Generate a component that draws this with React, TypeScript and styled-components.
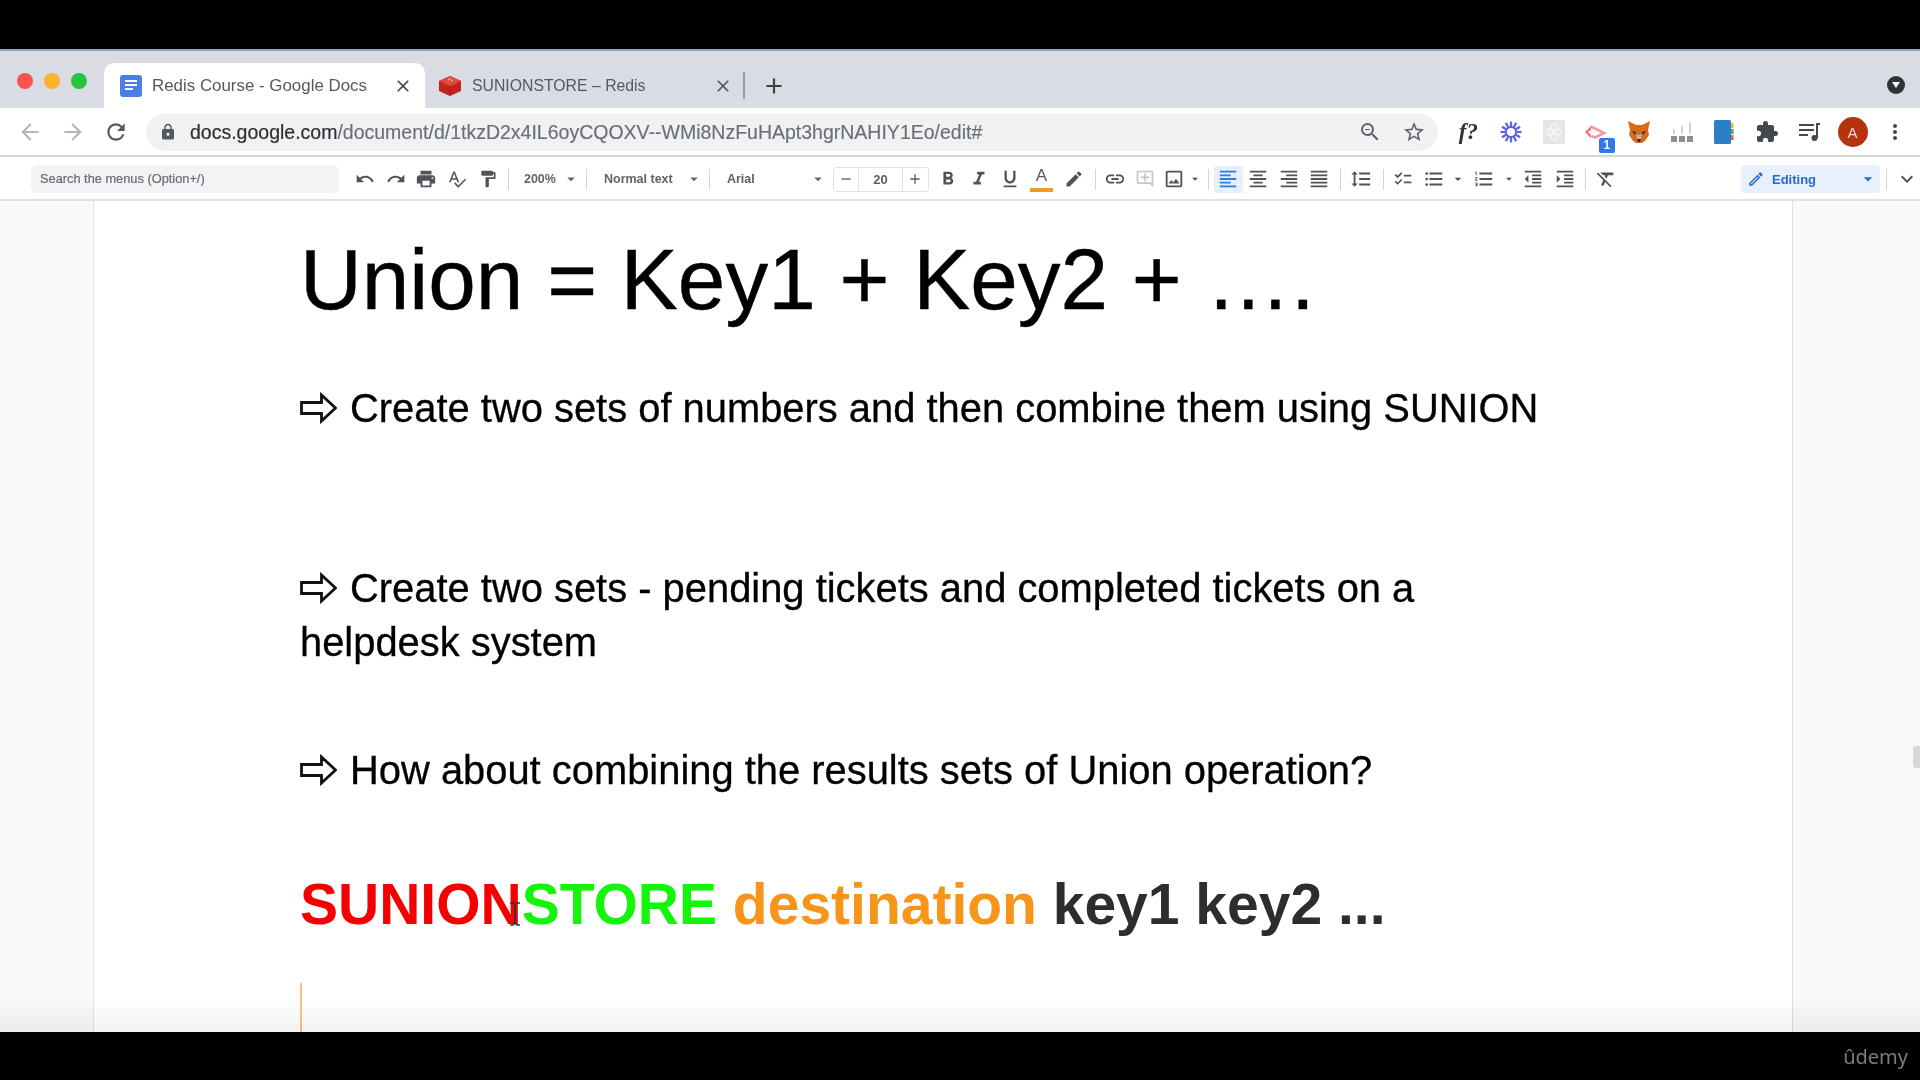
import React from "react";
import styled, { createGlobalStyle } from "styled-components";
import {
  MdArrowBack, MdArrowForward, MdRefresh, MdLock, MdZoomOut, MdStarBorder, MdExtension, MdMoreVert, MdClose, MdAdd,
  MdUndo, MdRedo, MdPrint, MdSpellcheck, MdFormatPaint, MdArrowDropDown, MdRemove, MdFormatBold, MdFormatItalic,
  MdFormatUnderlined, MdEdit, MdLink, MdOutlineAddComment, MdOutlineImage, MdFormatAlignLeft, MdFormatAlignCenter,
  MdFormatAlignRight, MdFormatAlignJustify, MdFormatLineSpacing, MdChecklist, MdFormatListBulleted, MdFormatListNumbered,
  MdFormatIndentDecrease, MdFormatIndentIncrease, MdFormatClear, MdKeyboardArrowDown, MdOutlineEdit,
} from "react-icons/md";

const Global = createGlobalStyle`
  html, body { margin: 0; padding: 0; background: #000; }
  body { font-family: "Liberation Sans", Arial, sans-serif; }
`;

const Screen = styled.div`
  width: 1920px;
  height: 1080px;
  display: flex;
  flex-direction: column;
  background: #000;
  overflow: hidden;
`;
const Letterbox = styled.div<{ $h: number }>`
  height: ${(p) => p.$h}px;
  flex: none;
  background: #000;
  display: flex;
  justify-content: flex-end;
  align-items: center;
`;
const UdemyMark = styled.span`
  color: #7c7c7c;
  font-size: 20px;
  font-family: "Noto Sans", sans-serif;
  margin: 1px 12px 0 0;
  filter: blur(0.5px);
`;
const Chrome = styled.div`
  flex: none;
  filter: blur(0.55px);
`;
const TabStrip = styled.div`
  height: 59px;
  box-sizing: border-box;
  background: #d9dce3;
  border-top: 2px solid #8fa6c6;
  display: flex;
  align-items: flex-end;
`;
const Lights = styled.div`
  width: 104px;
  height: 45px;
  box-sizing: border-box;
  padding: 10px 0 0 17px;
  display: flex;
  gap: 11px;
  align-items: flex-start;
`;
const Light = styled.span<{ $c: string }>`
  width: 16px;
  height: 16px;
  border-radius: 50%;
  background: ${(p) => p.$c};
`;
const Tab = styled.div<{ $active?: boolean }>`
  width: ${(p) => (p.$active ? 321 : 318)}px;
  height: 45px;
  box-sizing: border-box;
  padding: 0 ${(p) => (p.$active ? 12 : 10)}px 0 ${(p) => (p.$active ? 16 : 13)}px;
  background: ${(p) => (p.$active ? "#fff" : "transparent")};
  border-radius: 10px 10px 0 0;
  display: flex;
  align-items: center;
  gap: 10px;
  color: #55585d;
`;
const TabTitle = styled.span<{ $size: number }>`
  flex: 1;
  white-space: nowrap;
  font-size: ${(p) => p.$size}px;
`;
const TabDivider = styled.span`
  width: 2px;
  height: 27px;
  margin-bottom: 9px;
  background: #9a9da3;
`;
const NewTab = styled.span`
  width: 58px;
  height: 45px;
  display: flex;
  align-items: center;
  justify-content: center;
  color: #3c4043;
  font-size: 26px;
`;
const ProfileDot = styled.span`
  margin: 0 15px 14px auto;
  width: 18px;
  height: 18px;
  border-radius: 50%;
  background: #2f3336;
  display: flex;
  align-items: center;
  justify-content: center;
`;
const NavBar = styled.div`
  height: 49px;
  box-sizing: border-box;
  background: #fff;
  border-bottom: 2px solid #d5d7da;
  display: flex;
  align-items: center;
  padding: 1px 0 0 8px;
`;
const NavBtn = styled.span<{ $c: string; $w: number }>`
  width: ${(p) => p.$w}px;
  display: flex;
  justify-content: center;
  color: ${(p) => p.$c};
  font-size: 26px;
`;
const Omnibox = styled.div`
  margin-left: 9px;
  width: 1292px;
  height: 37px;
  box-sizing: border-box;
  border-radius: 19px;
  background: #f0f1f3;
  display: flex;
  align-items: center;
  padding: 0 2px 0 13px;
  font-size: 19.5px;
  white-space: nowrap;
`;
const Lock = styled.span`
  color: #55585c;
  display: flex;
  font-size: 18px;
  margin-right: 13px;
`;
const Host = styled.span`
  color: #2e3033;
  -webkit-text-stroke: 0.2px #2e3033;
`;
const Path = styled.span`
  color: #6c7074;
  flex: 1;
  -webkit-text-stroke: 0.15px #6c7074;
`;
const OmniIcon = styled.span`
  display: flex;
  color: #5f6368;
  font-size: 24px;
  width: 44px;
  justify-content: center;
`;
const Extensions = styled.div`
  display: flex;
  align-items: center;
  margin-left: 9px;
`;
const Ext = styled.span`
  width: 42.7px;
  display: flex;
  justify-content: center;
  align-items: center;
  position: relative;
  color: #45484c;
  font-size: 24px;
`;
const FnGlyph = styled.span`
  font-family: "Liberation Serif", serif;
  font-style: italic;
  font-weight: 700;
  font-size: 23px;
  color: #333;
`;
const Badge = styled.span`
  position: absolute;
  right: 3px;
  bottom: -9px;
  width: 16px;
  height: 15px;
  border-radius: 2px;
  background: #2f7ae5;
  color: #fff;
  font-size: 12px;
  font-weight: 700;
  text-align: center;
  line-height: 15px;
`;
const Avatar = styled.span`
  width: 30px;
  height: 30px;
  border-radius: 50%;
  background: #b5330f;
  color: #f5d9d0;
  font-size: 15px;
  display: flex;
  align-items: center;
  justify-content: center;
`;
const Toolbar = styled.div`
  height: 44px;
  box-sizing: border-box;
  background: #fff;
  border-bottom: 2px solid #dfe1e4;
  display: flex;
  align-items: center;
  padding: 2px 0 0 31px;
  color: #55585c;
`;
const SearchMenus = styled.div`
  width: 308px;
  height: 28px;
  box-sizing: border-box;
  margin-right: 11px;
  border-radius: 6px;
  background: #f1f3f4;
  color: #686b70;
  font-size: 12.8px;
  -webkit-text-stroke: 0.2px #686b70;
  line-height: 28px;
  padding-left: 9px;
`;
const Slot = styled.span<{ $w: number; $c?: string; $s?: number; $bg?: boolean }>`
  flex: none;
  width: ${(p) => p.$w}px;
  height: 27px;
  display: flex;
  align-items: center;
  justify-content: center;
  color: ${(p) => p.$c || "#505357"};
  font-size: ${(p) => p.$s || 22}px;
  background: ${(p) => (p.$bg ? "#e6effc" : "transparent")};
  border-radius: 2px;
`;
const Sep = styled.span<{ $l?: number; $r?: number }>`
  flex: none;
  width: 1px;
  height: 21px;
  background: #d3d5d8;
  margin: 0 ${(p) => p.$r ?? 5}px 0 ${(p) => p.$l ?? 5}px;
`;
const Drop = styled.span<{ $w: number; $pad: number }>`
  flex: none;
  width: ${(p) => p.$w}px;
  box-sizing: border-box;
  padding: 0 1px 0 ${(p) => p.$pad}px;
  display: flex;
  align-items: center;
  justify-content: space-between;
  font-size: 12.5px;
  font-weight: 700;
  color: #606367;
  white-space: nowrap;
`;
const SizeBox = styled.div`
  flex: none;
  margin: 0 4px 0 5px;
  width: 96px;
  height: 25px;
  box-sizing: border-box;
  border: 1px solid #e0e2e5;
  border-radius: 3px;
  display: grid;
  grid-template-columns: 24px 1fr 25px;
  align-items: center;
  font-weight: 700;
  color: #5b5e62;
  text-align: center;
`;
const SizeCell = styled.span`
  height: 100%;
  display: flex;
  align-items: center;
  justify-content: center;
  font-size: 16px;
`;
const SizeValue = styled(SizeCell)`
  font-size: 13px;
  border-left: 1px solid #e0e2e5;
  border-right: 1px solid #e0e2e5;
`;
const ColorA = styled.span`
  width: 23px;
  height: 26px;
  box-sizing: border-box;
  border-bottom: 4px solid #ef9a2d;
  font-size: 17px;
  line-height: 20px;
  text-align: center;
  color: #55585c;
`;
const EditPill = styled.div`
  margin-left: auto;
  width: 139px;
  height: 28px;
  box-sizing: border-box;
  border-radius: 4px;
  background: #e8f0fd;
  color: #2a69d0;
  display: flex;
  align-items: center;
  padding: 0 2px 0 6px;
  font-size: 13px;
  font-weight: 700;
  gap: 7px;
`;
const EditLabel = styled.span`
  flex: 1;
`;
const Workspace = styled.main`
  flex: 1;
  min-height: 0;
  position: relative;
  background: #f8f9fa;
  overflow: hidden;
  display: flex;
  padding-left: 93px;
`;
const Page = styled.article`
  width: 1700px;
  flex: none;
  box-sizing: border-box;
  background: #fff;
  border-left: 1px solid #e1e3e6;
  border-right: 1px solid #dcdee1;
  padding: 31px 0 0 206px;
  color: #000;
  filter: blur(0.35px);
`;
const Heading = styled.h1`
  margin: 0;
  font-size: 85.5px;
  font-weight: 400;
  line-height: 96px;
  white-space: nowrap;
  -webkit-text-stroke: 0.4px #000;
`;
const Line = styled.p<{ $top: number }>`
  margin: ${(p) => p.$top}px 0 0;
  font-size: 39.9px;
  line-height: 54px;
  white-space: nowrap;
  -webkit-text-stroke: 0.3px #000;
`;
const ArrowGlyph = styled.svg`
  width: 37px;
  height: 32px;
  margin-right: 13px;
  vertical-align: -2px;
`;
const Command = styled.p`
  margin: 72px 0 0;
  font-size: 57px;
  line-height: 70px;
  font-weight: 700;
  white-space: nowrap;
  color: #2d2d2d;
`;
const Word = styled.span<{ $c: string }>`
  color: ${(p) => p.$c};
`;
const Caret = styled.div`
  width: 2px;
  height: 60px;
  margin-top: 44px;
  background: #f4c48f;
`;
const IBeam = styled.svg`
  position: absolute;
  left: 507px;
  top: 701px;
`;
const Thumb = styled.span`
  position: absolute;
  right: 0;
  top: 545px;
  width: 7px;
  height: 22px;
  border-radius: 3px 0 0 3px;
  background: #d6d8dc;
`;
const BottomFade = styled.div`
  position: absolute;
  left: 0;
  right: 0;
  bottom: 0;
  height: 34px;
  background: linear-gradient(rgba(0, 0, 0, 0), rgba(0, 0, 0, 0.055));
  pointer-events: none;
`;

const DocsIcon = () => (
  <svg width="22" height="22" viewBox="0 0 22 22">
    <rect x="0" y="0" width="22" height="22" rx="3" fill="#4a7fe8" />
    <path d="M5 6h12M5 10h12M5 14h8" stroke="#fff" strokeWidth="2" />
  </svg>
);
const RedisIcon = () => (
  <svg width="24" height="22" viewBox="0 0 24 22">
    <path d="M1 6l11-5 11 5v10l-11 5L1 16z" fill="#c4221c" />
    <path d="M1 6l11 5 11-5-11-5z" fill="#df4a3c" />
    <path d="M12 11v10" stroke="#a51a15" strokeWidth="1" />
    <path d="M10 5l3-1.5M13 6l2-1" stroke="#f4c6c0" strokeWidth="1" />
  </svg>
);
const Burst = () => (
  <svg width="22" height="22" viewBox="0 0 22 22">
    <g stroke="#5d62e0" strokeWidth="2.2">
      {Array.from({ length: 12 }).map((_, i) => {
        const a = (i * Math.PI) / 6;
        return <line key={i} x1={11 + 4.5 * Math.cos(a)} y1={11 + 4.5 * Math.sin(a)} x2={11 + 10.5 * Math.cos(a)} y2={11 + 10.5 * Math.sin(a)} />;
      })}
    </g>
    <circle cx="11" cy="11" r="5" fill="none" stroke="#5d62e0" strokeWidth="1.8" />
  </svg>
);
const GreySquare = () => (
  <svg width="22" height="24" viewBox="0 0 22 24">
    <rect width="22" height="24" rx="1" fill="#e6e6e6" />
    <g fill="none" stroke="#f5f5f5" strokeWidth="1.5">
      <circle cx="11" cy="7" r="3" /><circle cx="7" cy="12" r="3" /><circle cx="15" cy="12" r="3" /><circle cx="11" cy="17" r="3" />
    </g>
  </svg>
);
const RedShape = () => (
  <svg width="24" height="24" viewBox="0 0 24 24">
    <path d="M1 12l6-6v4l-3 2 3 3v3z" fill="#ee6f76" />
    <path d="M7 5l16 8-12 6-4-2 1-2 3 1 6-3-10-5z" fill="#f19aa0" />
  </svg>
);
const Fox = () => (
  <svg width="24" height="24" viewBox="0 0 24 24">
    <path d="M1 1l8 4h6l8-4-2 9 1 5-4 6-3 2h-6l-3-2-4-6 1-5z" fill="#d96a1a" />
    <path d="M9 14l3 1 3-1-1 5h-4z" fill="#c0ad9e" />
    <path d="M5 11l4 1-1 3zM19 11l-4 1 1 3z" fill="#3b2a1f" />
    <path d="M10 19h4l-1 3h-2z" fill="#3b2a1f" />
  </svg>
);
const Bars = () => (
  <svg width="24" height="22" viewBox="0 0 24 22">
    <g fill="#8c8f93">
      <rect x="1" y="15" width="6" height="6" /><rect x="9" y="15" width="6" height="6" /><rect x="17" y="15" width="6" height="6" />
    </g>
    <g fill="#d3d4d6">
      <rect x="3" y="8" width="2" height="5" /><rect x="11" y="5" width="2" height="8" /><rect x="19" y="1" width="2" height="12" />
    </g>
  </svg>
);
const Book = () => (
  <svg width="20" height="24" viewBox="0 0 20 24">
    <rect width="17" height="24" rx="1.5" fill="#2b7fc7" />
    <rect x="17" y="3" width="2.5" height="5" fill="#ecb33c" />
    <rect x="17" y="9" width="2.5" height="5" fill="#4da868" />
    <rect x="17" y="15" width="2.5" height="5" fill="#d9634f" />
  </svg>
);
const Playlist = () => (
  <svg width="24" height="22" viewBox="0 0 24 22">
    <path d="M1 4h15M1 9h15M1 14h9" stroke="#45484c" strokeWidth="2" fill="none" />
    <path d="M19 17V3h3" stroke="#45484c" strokeWidth="2" fill="none" />
    <circle cx="16.5" cy="17" r="3" fill="#45484c" />
  </svg>
);
const DocArrow = () => (
  <ArrowGlyph viewBox="0 0 37 32">
    <path d="M1.5 10.5h20V3l14 13-14 13v-7.5h-20z" fill="#fff" stroke="#111" strokeWidth="2.8" strokeLinejoin="miter" />
  </ArrowGlyph>
);

export default function App() {
  return (
    <Screen>
      <Global />
      <Letterbox $h={49} />
      <Chrome>
        <TabStrip>
          <Lights>
            <Light $c="#f9544e" />
            <Light $c="#fbb32e" />
            <Light $c="#28c33f" />
          </Lights>
          <Tab $active>
            <DocsIcon />
            <TabTitle $size={16.9}>Redis Course - Google Docs</TabTitle>
            <MdClose size={20} color="#45484c" />
          </Tab>
          <Tab>
            <RedisIcon />
            <TabTitle $size={15.8}>SUNIONSTORE – Redis</TabTitle>
            <MdClose size={20} color="#55585c" />
          </Tab>
          <TabDivider />
          <NewTab><MdAdd /></NewTab>
          <ProfileDot>
            <svg width="8" height="6" viewBox="0 0 8 6"><path d="M0 0h8L4 6z" fill="#fff" /></svg>
          </ProfileDot>
        </TabStrip>
        <NavBar>
          <NavBtn $c="#b4b7bb" $w={43}><MdArrowBack /></NavBtn>
          <NavBtn $c="#b4b7bb" $w={43}><MdArrowForward /></NavBtn>
          <NavBtn $c="#55585c" $w={43}><MdRefresh /></NavBtn>
          <Omnibox>
            <Lock><MdLock /></Lock>
            <Host>docs.google.com</Host>
            <Path>/document/d/1tkzD2x4IL6oyCQOXV--WMi8NzFuHApt3hgrNAHIY1Eo/edit#</Path>
            <OmniIcon><MdZoomOut /></OmniIcon>
            <OmniIcon><MdStarBorder /></OmniIcon>
          </Omnibox>
          <Extensions>
            <Ext><FnGlyph>f?</FnGlyph></Ext>
            <Ext><Burst /></Ext>
            <Ext><GreySquare /></Ext>
            <Ext><RedShape /><Badge>1</Badge></Ext>
            <Ext><Fox /></Ext>
            <Ext><Bars /></Ext>
            <Ext><Book /></Ext>
            <Ext><MdExtension /></Ext>
            <Ext><Playlist /></Ext>
            <Ext><Avatar>A</Avatar></Ext>
            <Ext><MdMoreVert /></Ext>
          </Extensions>
        </NavBar>
        <Toolbar>
          <SearchMenus>Search the menus (Option+/)</SearchMenus>
          <Slot $w={30.6} $s={20}><MdUndo /></Slot>
          <Slot $w={30.6} $s={20}><MdRedo /></Slot>
          <Slot $w={30.6}><MdPrint /></Slot>
          <Slot $w={30.6} $s={20}><MdSpellcheck /></Slot>
          <Slot $w={30.6} $s={20}><MdFormatPaint /></Slot>
          <Sep />
          <Drop $w={67} $pad={10}>200%<MdArrowDropDown size={18} /></Drop>
          <Sep />
          <Drop $w={112} $pad={12}>Normal text<MdArrowDropDown size={18} /></Drop>
          <Sep />
          <Drop $w={113} $pad={12}>Arial<MdArrowDropDown size={18} /></Drop>
          <SizeBox>
            <SizeCell><MdRemove /></SizeCell>
            <SizeValue>20</SizeValue>
            <SizeCell><MdAdd /></SizeCell>
          </SizeBox>
          <Slot $w={31}><MdFormatBold /></Slot>
          <Slot $w={31}><MdFormatItalic /></Slot>
          <Slot $w={31}><MdFormatUnderlined /></Slot>
          <Slot $w={31}><ColorA>A</ColorA></Slot>
          <Slot $w={35} $s={20}><MdEdit /></Slot>
          <Sep $l={3} $r={4} />
          <Slot $w={30}><MdLink /></Slot>
          <Slot $w={31} $c="#c4c6c9" $s={20}><MdOutlineAddComment /></Slot>
          <Slot $w={27}><MdOutlineImage /></Slot>
          <Slot $w={14} $s={18}><MdArrowDropDown /></Slot>
          <Sep $l={6} $r={5} />
          <Slot $w={29} $c="#2f7ae5" $bg><MdFormatAlignLeft /></Slot>
          <Slot $w={31}><MdFormatAlignCenter /></Slot>
          <Slot $w={30}><MdFormatAlignRight /></Slot>
          <Slot $w={30}><MdFormatAlignJustify /></Slot>
          <Sep $l={6} $r={5} />
          <Slot $w={30}><MdFormatLineSpacing /></Slot>
          <Sep $l={7} $r={4} />
          <Slot $w={30} $s={20}><MdChecklist /></Slot>
          <Slot $w={32}><MdFormatListBulleted /></Slot>
          <Slot $w={16} $s={18}><MdArrowDropDown /></Slot>
          <Slot $w={36}><MdFormatListNumbered /></Slot>
          <Slot $w={14} $s={18}><MdArrowDropDown /></Slot>
          <Slot $w={34}><MdFormatIndentDecrease /></Slot>
          <Slot $w={30}><MdFormatIndentIncrease /></Slot>
          <Sep />
          <Slot $w={30}><MdFormatClear /></Slot>
          <EditPill>
            <MdOutlineEdit size={18} />
            <EditLabel>Editing</EditLabel>
            <MdArrowDropDown size={20} />
          </EditPill>
          <Sep $l={6} $r={7} />
          <Slot $w={26} $s={24}><MdKeyboardArrowDown /></Slot>
        </Toolbar>
      </Chrome>
      <Workspace>
        <Page>
          <Heading>Union = Key1 + Key2 + ….</Heading>
          <Line $top={53}><DocArrow />Create two sets of numbers and then combine them using SUNION</Line>
          <Line $top={126}><DocArrow />Create two sets - pending tickets and completed tickets on a</Line>
          <Line $top={0}>helpdesk system</Line>
          <Line $top={74}><DocArrow />How about combining the results sets of Union operation?</Line>
          <Command>
            <Word $c="#f40000">SUNION</Word>
            <Word $c="#14f50c">STORE</Word> <Word $c="#f7941a">destination</Word> key1 key2 ...
          </Command>
          <Caret />
        </Page>
        <IBeam width="16" height="24" viewBox="0 0 16 24">
          <path d="M3 1h3l2 2 2-2h3M8 3v18M3 23h3l2-2 2 2h3" fill="none" stroke="#333" strokeWidth="1.6" />
        </IBeam>
        <Thumb />
        <BottomFade />
      </Workspace>
      <Letterbox $h={48}>
        <UdemyMark>ûdemy</UdemyMark>
      </Letterbox>
    </Screen>
  );
}
